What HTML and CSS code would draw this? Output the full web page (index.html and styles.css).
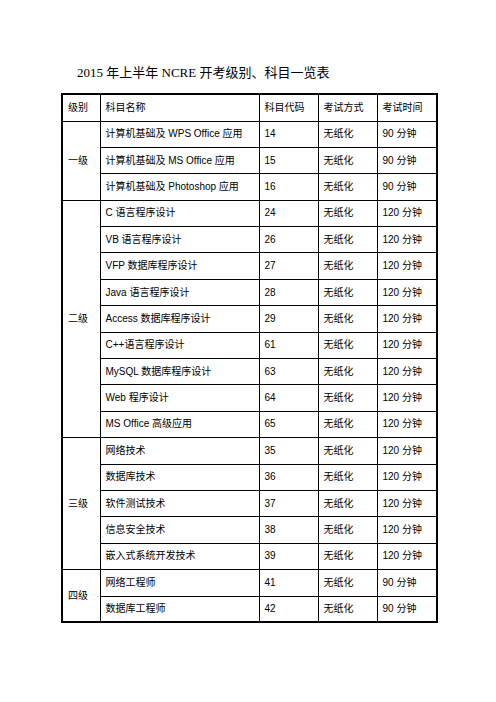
FILE: index.html
```html
<!DOCTYPE html>
<html lang="zh">
<head>
<meta charset="utf-8">
<link rel="stylesheet" href="styles.css">
</head>
<body>
<div class="page">
  <h1 class="title">2015 年上半年 NCRE 开考级别、科目一览表</h1>
  <table class="grid">
    <colgroup>
      <col class="c1"><col class="c2"><col class="c3"><col class="c4"><col class="c5">
    </colgroup>
    <tr class="head"><td>级别</td><td>科目名称</td><td>科目代码</td><td>考试方式</td><td>考试时间</td></tr>
    <tr><td rowspan="3">一级</td><td>计算机基础及 WPS Office 应用</td><td>14</td><td>无纸化</td><td>90 分钟</td></tr>
    <tr><td>计算机基础及 MS Office 应用</td><td>15</td><td>无纸化</td><td>90 分钟</td></tr>
    <tr><td>计算机基础及 Photoshop 应用</td><td>16</td><td>无纸化</td><td>90 分钟</td></tr>
    <tr><td rowspan="9">二级</td><td>C 语言程序设计</td><td>24</td><td>无纸化</td><td>120 分钟</td></tr>
    <tr><td>VB 语言程序设计</td><td>26</td><td>无纸化</td><td>120 分钟</td></tr>
    <tr><td>VFP 数据库程序设计</td><td>27</td><td>无纸化</td><td>120 分钟</td></tr>
    <tr><td>Java 语言程序设计</td><td>28</td><td>无纸化</td><td>120 分钟</td></tr>
    <tr><td>Access 数据库程序设计</td><td>29</td><td>无纸化</td><td>120 分钟</td></tr>
    <tr><td>C++语言程序设计</td><td>61</td><td>无纸化</td><td>120 分钟</td></tr>
    <tr><td>MySQL 数据库程序设计</td><td>63</td><td>无纸化</td><td>120 分钟</td></tr>
    <tr><td>Web 程序设计</td><td>64</td><td>无纸化</td><td>120 分钟</td></tr>
    <tr><td>MS Office 高级应用</td><td>65</td><td>无纸化</td><td>120 分钟</td></tr>
    <tr><td rowspan="5">三级</td><td>网络技术</td><td>35</td><td>无纸化</td><td>120 分钟</td></tr>
    <tr><td>数据库技术</td><td>36</td><td>无纸化</td><td>120 分钟</td></tr>
    <tr><td>软件测试技术</td><td>37</td><td>无纸化</td><td>120 分钟</td></tr>
    <tr><td>信息安全技术</td><td>38</td><td>无纸化</td><td>120 分钟</td></tr>
    <tr><td>嵌入式系统开发技术</td><td>39</td><td>无纸化</td><td>120 分钟</td></tr>
    <tr><td rowspan="2">四级</td><td>网络工程师</td><td>41</td><td>无纸化</td><td>90 分钟</td></tr>
    <tr><td>数据库工程师</td><td>42</td><td>无纸化</td><td>90 分钟</td></tr>
  </table>
</div>
</body>
</html>
```
FILE: styles.css
```css
html, body {
  margin: 0;
  padding: 0;
  background: #fff;
}
.page {
  padding: 65px 0 0 61px;
}
.title {
  margin: 0 0 12px 16px;
  font-family: "Liberation Serif", "Noto Sans CJK SC", serif;
  font-size: 13px;
  line-height: 16px;
  font-weight: normal;
  color: #000;
}
.grid {
  border-collapse: collapse;
  table-layout: fixed;
  width: 375px;
  border: 2px solid #000;
  font-family: "Liberation Sans", "Noto Sans CJK SC", sans-serif;
  font-size: 10px;
  color: #000;
}
.c1 { width: 38px; }
.c2 { width: 159px; }
.c3 { width: 59px; }
.c4 { width: 59px; }
.c5 { width: 60px; }
.grid tr {
  height: 26.4px;
}
.grid tr.head {
  height: 27px;
}
.grid td {
  border: 1px solid #000;
  padding: 0 0 0 5px;
  vertical-align: middle;
  white-space: nowrap;
  line-height: 12px;
}
```
